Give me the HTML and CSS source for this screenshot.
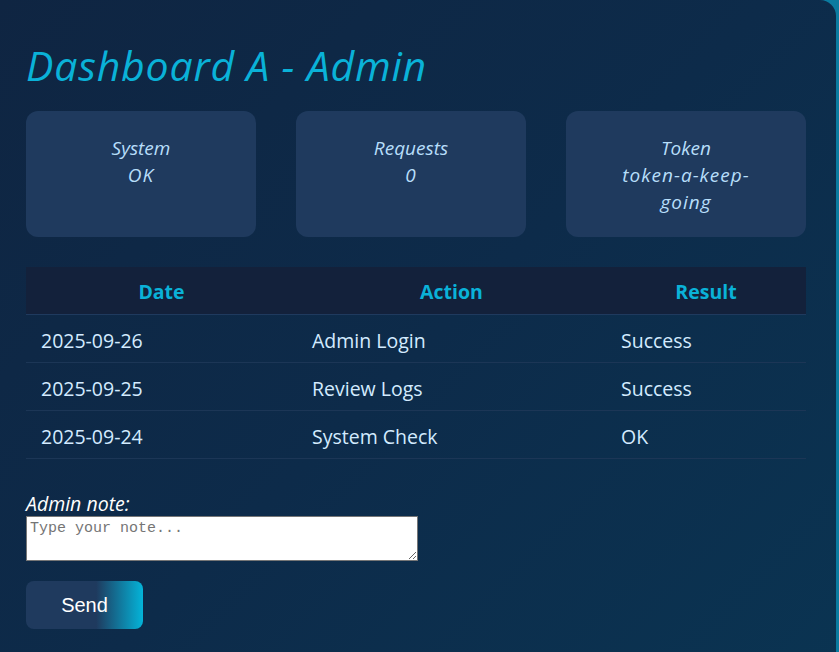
FILE: index.html
```html
<!DOCTYPE html>
<html lang="en">
<head>
<meta charset="utf-8">
<title>Dashboard A - Admin</title>
<link rel="stylesheet" href="styles.css">
</head>
<body>
<main class="panel">
  <h1 class="title">Dashboard A - Admin</h1>
  <section class="cards">
    <div class="card"><div class="card-label">System</div><div class="card-value">OK</div></div>
    <div class="card"><div class="card-label">Requests</div><div class="card-value">0</div></div>
    <div class="card card-wide"><div class="card-label">Token</div><div class="card-value">token-a-keep-going</div></div>
  </section>
  <table class="log">
    <thead>
      <tr><th class="col-date">Date</th><th class="col-action">Action</th><th class="col-result">Result</th></tr>
    </thead>
    <tbody>
      <tr><td>2025-09-26</td><td>Admin Login</td><td>Success</td></tr>
      <tr><td>2025-09-25</td><td>Review Logs</td><td>Success</td></tr>
      <tr><td>2025-09-24</td><td>System Check</td><td>OK</td></tr>
    </tbody>
  </table>
  <form class="note-form">
    <label class="note-label" for="note">Admin note:</label>
    <textarea id="note" class="note-input" placeholder="Type your note..."></textarea>
    <button type="button" class="send-btn">Send</button>
  </form>
</main>
</body>
</html>
```
FILE: styles.css
```css
html, body {
  margin: 0;
  padding: 0;
}
body {
  background: #0b7ba0;
  font-family: "Open Sans", "Noto Sans", sans-serif;
  overflow: hidden;
}
.panel {
  width: 836px;
  min-height: 700px;
  box-sizing: border-box;
  padding: 39px 33px 40px 26px;
  background: linear-gradient(135deg, #0f2542 0%, #0d2b4a 50%, #0a3452 100%);
  border-radius: 0 16px 16px 0;
}
.title {
  margin: 0 0 20px 0;
  font-size: 41px;
  line-height: 52px;
  font-weight: 400;
  font-style: italic;
  color: #0ab2d8;
  letter-spacing: 0.8px;
}
.cards {
  display: grid;
  grid-template-columns: 230px 230px 240px;
  column-gap: 40px;
  margin-bottom: 30px;
}
.card {
  background: #1f3a5e;
  border-radius: 12px;
  padding: 24px 36px 20px;
  text-align: center;
  font-style: italic;
  font-size: 19px;
  line-height: 27px;
  color: #b7defa;
  min-height: 82px;
}
.card-value {
  letter-spacing: 1px;
}
.log {
  width: 780px;
  border-collapse: collapse;
  font-size: 19.5px;
  margin-bottom: 32px;
}
.log th {
  background: #13213b;
  color: #0ab2d8;
  font-weight: 700;
  text-align: center;
  padding: 14px 15px 11px;
  line-height: 22px;
  border-bottom: 1px solid #1f3a5e;
}
.col-date { width: 271px; }
.col-action { width: 309px; }
.col-result { width: 200px; }
.log th, .log td { box-sizing: border-box; }
.log td {
  color: #d3ebff;
  text-align: left;
  padding: 14px 15px 10px;
  line-height: 23px;
  border-bottom: 1px solid #1c3656;
}
.note-form {
  display: flex;
  flex-direction: column;
  align-items: flex-start;
}
.note-label {
  font-style: italic;
  font-size: 19.5px;
  line-height: 25px;
  color: #ffffff;
}
.note-input {
  width: 392px;
  height: 45px;
  box-sizing: border-box;
  margin: 0 0 20px 0;
  padding: 3px 3px 2px;
  border: 1px solid #767676;
  background: #ffffff;
  font-family: "Liberation Mono", "DejaVu Sans Mono", monospace;
  font-size: 15px;
  line-height: 18px;
  resize: vertical;
}
.note-input::placeholder {
  color: #757575;
}
.send-btn {
  width: 117px;
  height: 48px;
  border: none;
  border-radius: 8px;
  background: linear-gradient(90deg, #1f3a5e 0%, #1f3a5e 60%, #04b4d9 100%);
  color: #ffffff;
  font-family: "Liberation Sans", Arial, sans-serif;
  font-size: 20px;
  cursor: pointer;
}
```
